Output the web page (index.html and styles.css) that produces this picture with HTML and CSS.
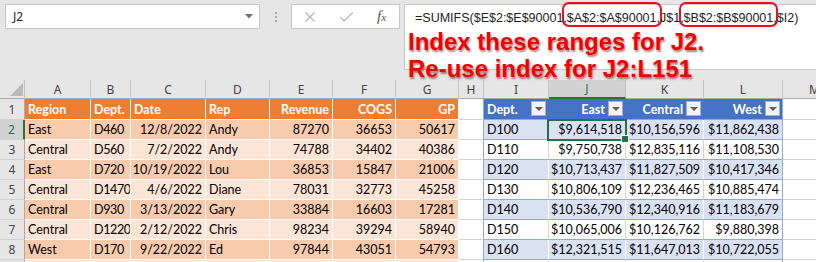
FILE: index.html
```html
<!DOCTYPE html>
<html lang="en">
<head>
  <meta charset="UTF-8">
  <meta name="viewport" content="width=device-width, initial-scale=1.0">
  <title>SUMIFS index</title>
  <link rel="stylesheet" href="styles.css">
</head>
<body>
  <div class="app">
    <div class="toolbar">
      <div class="namebox">
        <span>J2</span>
        <svg width="8" height="5" viewBox="0 0 8 5"><path d="M0 0h8L4 4.5z" fill="#707070"/></svg>
      </div>
      <div class="grip"><i></i><i></i><i></i></div>
      <div class="fxbox">
        <svg width="12" height="10" viewBox="0 0 12 10"><path d="M1.5 0.5l9 9M10.5 0.5l-9 9" stroke="#b4b4b4" stroke-width="1.3" fill="none"/></svg>
        <svg width="15" height="10" viewBox="0 0 15 10"><path d="M1 5l4 4 9-8.5" stroke="#bdbdbd" stroke-width="1.5" fill="none"/></svg>
        <span class="fx"><i>f</i><i class="sx">x</i></span>
      </div>
      <div class="formula">
        <div class="fx-text">=SUMIFS($E$2:$E$90001,<span class="ring">$A$2:$A$90001</span>,J$1,<span class="ring">$B$2:$B$90001</span>,$I2)</div>
        <div class="note">Index these ranges for J2.<br>Re-use index for J2:L151</div>
      </div>
    </div>

    <div class="sheet">
      <!-- column letters -->
      <div class="hd corner"><span class="tri"></span></div>
      <div class="hd">A</div><div class="hd">B</div><div class="hd">C</div><div class="hd">D</div>
      <div class="hd">E</div><div class="hd">F</div><div class="hd">G</div><div class="hd">H</div>
      <div class="hd">I</div><div class="hd sel-col">J</div><div class="hd">K</div><div class="hd">L</div>
      <div class="hd">M</div>

      <!-- row 1 -->
      <div class="rh">1</div>
      <div class="c oh">Region</div><div class="c oh">Dept.</div><div class="c oh">Date</div><div class="c oh">Rep</div>
      <div class="c oh r">Revenue</div><div class="c oh r">COGS</div><div class="c oh r">GP</div>
      <div class="c gap"></div>
      <div class="c bh split">Dept.<span class="flt"></span></div>
      <div class="c bh r">East<span class="flt"></span></div>
      <div class="c bh r">Central<span class="flt"></span></div>
      <div class="c bh r end">West<span class="flt"></span></div>
      <div class="c"></div>

      <!-- row 2 -->
      <div class="rh sel-row">2</div>
      <div class="c o1">East</div><div class="c o1 dc">D460</div><div class="c o1 r">12/8/2022</div><div class="c o1">Andy</div>
      <div class="c o1 r">87270</div><div class="c o1 r">36653</div><div class="c o1 r">50617</div>
      <div class="c gap"></div>
      <div class="c b1">D100</div><div class="c b1 r active">$9,614,518</div><div class="c b1 r">$10,156,596</div><div class="c b1 r end">$11,862,438</div>
      <div class="c"></div>

      <!-- row 3 -->
      <div class="rh">3</div>
      <div class="c o2">Central</div><div class="c o2 dc">D560</div><div class="c o2 r">7/2/2022</div><div class="c o2">Andy</div>
      <div class="c o2 r">74788</div><div class="c o2 r">34402</div><div class="c o2 r">40386</div>
      <div class="c gap"></div>
      <div class="c b2">D110</div><div class="c b2 r">$9,750,738</div><div class="c b2 r">$12,835,116</div><div class="c b2 r end">$11,108,530</div>
      <div class="c"></div>

      <!-- row 4 -->
      <div class="rh">4</div>
      <div class="c o1">East</div><div class="c o1 dc">D720</div><div class="c o1 r">10/19/2022</div><div class="c o1">Lou</div>
      <div class="c o1 r">36853</div><div class="c o1 r">15847</div><div class="c o1 r">21006</div>
      <div class="c gap"></div>
      <div class="c b1">D120</div><div class="c b1 r">$10,713,437</div><div class="c b1 r">$11,827,509</div><div class="c b1 r end">$10,417,346</div>
      <div class="c"></div>

      <!-- row 5 -->
      <div class="rh">5</div>
      <div class="c o2">Central</div><div class="c o2 dc">D1470</div><div class="c o2 r">4/6/2022</div><div class="c o2">Diane</div>
      <div class="c o2 r">78031</div><div class="c o2 r">32773</div><div class="c o2 r">45258</div>
      <div class="c gap"></div>
      <div class="c b2">D130</div><div class="c b2 r">$10,806,109</div><div class="c b2 r">$12,236,465</div><div class="c b2 r end">$10,885,474</div>
      <div class="c"></div>

      <!-- row 6 -->
      <div class="rh">6</div>
      <div class="c o1">Central</div><div class="c o1 dc">D930</div><div class="c o1 r">3/13/2022</div><div class="c o1">Gary</div>
      <div class="c o1 r">33884</div><div class="c o1 r">16603</div><div class="c o1 r">17281</div>
      <div class="c gap"></div>
      <div class="c b1">D140</div><div class="c b1 r">$10,536,790</div><div class="c b1 r">$12,340,916</div><div class="c b1 r end">$11,183,679</div>
      <div class="c"></div>

      <!-- row 7 -->
      <div class="rh">7</div>
      <div class="c o2">Central</div><div class="c o2 dc">D1220</div><div class="c o2 r">2/12/2022</div><div class="c o2">Chris</div>
      <div class="c o2 r">98234</div><div class="c o2 r">39294</div><div class="c o2 r">58940</div>
      <div class="c gap"></div>
      <div class="c b2">D150</div><div class="c b2 r">$10,065,006</div><div class="c b2 r">$10,126,762</div><div class="c b2 r end">$9,880,398</div>
      <div class="c"></div>

      <!-- row 8 -->
      <div class="rh">8</div>
      <div class="c o1">West</div><div class="c o1 dc">D170</div><div class="c o1 r">9/22/2022</div><div class="c o1">Ed</div>
      <div class="c o1 r">97844</div><div class="c o1 r">43051</div><div class="c o1 r">54793</div>
      <div class="c gap"></div>
      <div class="c b1">D160</div><div class="c b1 r">$12,321,515</div><div class="c b1 r">$11,647,013</div><div class="c b1 r end">$10,722,055</div>
      <div class="c"></div>

      <!-- row 9, cut off by the window -->
      <div class="rh"></div>
      <div class="c o2"></div><div class="c o2"></div><div class="c o2"></div><div class="c o2"></div>
      <div class="c o2"></div><div class="c o2"></div><div class="c o2"></div>
      <div class="c gap"></div>
      <div class="c b2"></div><div class="c b2"></div><div class="c b2"></div><div class="c b2 end"></div>
      <div class="c"></div>
    </div>
  </div>
</body>
</html>
```

FILE: styles.css
```css
body {
  margin: 0;
  background: #e6e6e6;
  overflow: hidden;
}
.app {
  width: 816px;
  height: 262px;
  overflow: hidden;
}

/* formula bar */
.toolbar {
  display: flex;
  align-items: flex-start;
  height: 80px;
  box-sizing: border-box;
  padding: 4px 0 0 5px;
  background: #e6e6e6;
  font-family: 'Noto Sans', sans-serif;
}
.namebox {
  width: 255px;
  height: 25px;
  box-sizing: border-box;
  border: 1px solid #c6c6c6;
  background: white;
  display: flex;
  align-items: center;
  justify-content: space-between;
  padding: 0 6px 0 7px;
  font-size: 12px;
  color: #222;
}
.grip {
  width: 31px;
  display: flex;
  flex-direction: column;
  align-items: center;
  gap: 2px;
  padding-top: 8px;
}
.grip i {
  width: 2px;
  height: 2px;
  background: #a8a8a8;
}
.fxbox {
  width: 109px;
  height: 25px;
  box-sizing: border-box;
  border: 1px solid #c6c6c6;
  background: white;
  display: flex;
  align-items: center;
  padding-left: 12px;
  gap: 23px;
}
.fx {
  font-family: 'Liberation Serif', serif;
  font-size: 15px;
  color: #555;
  line-height: 1;
}
.fx .sx {
  font-size: 11px;
}
.formula {
  flex: 1;
  height: 66px;
  box-sizing: border-box;
  margin-left: 4px;
  border: 1px solid #c6c6c6;
  border-right: none;
  background: white;
  position: relative;
}
.fx-text {
  padding: 5px 0 0 10px;
  font-family: 'Liberation Sans', Arial, sans-serif;
  font-size: 12.5px;
  line-height: 16px;
  color: #222;
  white-space: nowrap;
}
.ring {
  border: 2px solid #e8101a;
  border-radius: 7px;
  padding: 7px 3px 0;
  margin: 0 -5px;
}
.note {
  position: absolute;
  left: 3px;
  top: 23px;
  font-family: 'Liberation Sans', Arial, sans-serif;
  font-weight: bold;
  font-size: 24px;
  line-height: 27px;
  color: #f40000;
  white-space: nowrap;
  text-shadow: 1px 2px 2px rgba(90, 0, 0, 0.5);
}

/* grid */
.sheet {
  display: grid;
  grid-template-columns: 25px 66px 40px 75px 64px 63px 63px 63px 25px 65px 77px 78px 79px 64px;
  grid-template-rows: 19px 21px repeat(8, 20px);
  width: 847px;
  background: white;
  font-family: Lato, sans-serif;
  font-size: 12.5px;
  color: #000;
}
.hd, .rh {
  box-sizing: border-box;
  display: flex;
  align-items: center;
  justify-content: center;
  background: #e6e6e6;
  font-family: 'Noto Sans', sans-serif;
  font-size: 12px;
  color: #444;
}
.hd {
  border-right: 1px solid #c4c4c4;
  border-bottom: 1px solid #ababab;
}
.rh {
  border-right: 1px solid #ababab;
  border-bottom: 1px solid #d0d0d0;
}
.corner {
  justify-content: flex-end;
  align-items: flex-end;
  padding: 0 1px 2px 0;
}
.tri {
  width: 0;
  height: 0;
  border-left: 13px solid transparent;
  border-bottom: 13px solid #b9b9b9;
}
.sel-col {
  background: #d2d2d2;
  border-bottom: 2px solid #217346;
  color: #217346;
}
.sel-row {
  background: #d2d2d2;
  border-right: 2px solid #217346;
  color: #217346;
}

.c {
  box-sizing: border-box;
  border-right: 1px solid #d4d4d4;
  border-bottom: 1px solid #d4d4d4;
  padding: 0 3px 2px;
  display: flex;
  align-items: flex-end;
  line-height: 15px;
  white-space: nowrap;
  overflow: hidden;
}
.c.r {
  justify-content: flex-end;
}
.c.dc {
  letter-spacing: -0.35px;
  padding-right: 0;
}
.oh {
  background: #ed7d31;
  color: white;
  font-weight: bold;
  border-color: white;
}
.o1 {
  background: #f8cbad;
  border-color: white;
}
.o2 {
  background: #fce4d6;
  border-color: white;
}
.gap {
  border-right-color: #8ea9db;
}
.bh {
  background: #4472c4;
  color: white;
  font-weight: bold;
  border-right-color: #4472c4;
  border-bottom-color: #8ea9db;
  padding-right: 2px;
}
.bh.split {
  justify-content: space-between;
}
.b1 {
  background: #d9e1f2;
  border-right-color: white;
  border-bottom-color: #8ea9db;
}
.b2 {
  background: white;
  border-bottom-color: #8ea9db;
}
.c.end {
  border-right-color: #8ea9db;
}
.flt {
  align-self: center;
  width: 15px;
  height: 15px;
  box-sizing: border-box;
  margin-left: 3px;
  border: 1px solid #b0b0b0;
  background: #f3f3f3;
  display: flex;
  align-items: center;
  justify-content: center;
  flex-shrink: 0;
}
.flt::after {
  content: '';
  border-left: 4px solid transparent;
  border-right: 4px solid transparent;
  border-top: 4px solid #5f5f5f;
  margin-top: 1px;
}
.active {
  position: relative;
  overflow: visible;
  z-index: 1;
}
.active::after {
  content: '';
  position: absolute;
  left: -2px;
  top: -1px;
  right: -2px;
  bottom: -2px;
  border: 2px solid #217346;
}
.active::before {
  content: '';
  position: absolute;
  right: -4px;
  bottom: -4px;
  width: 6px;
  height: 6px;
  background: #217346;
  border: 1px solid white;
  z-index: 2;
}
```
